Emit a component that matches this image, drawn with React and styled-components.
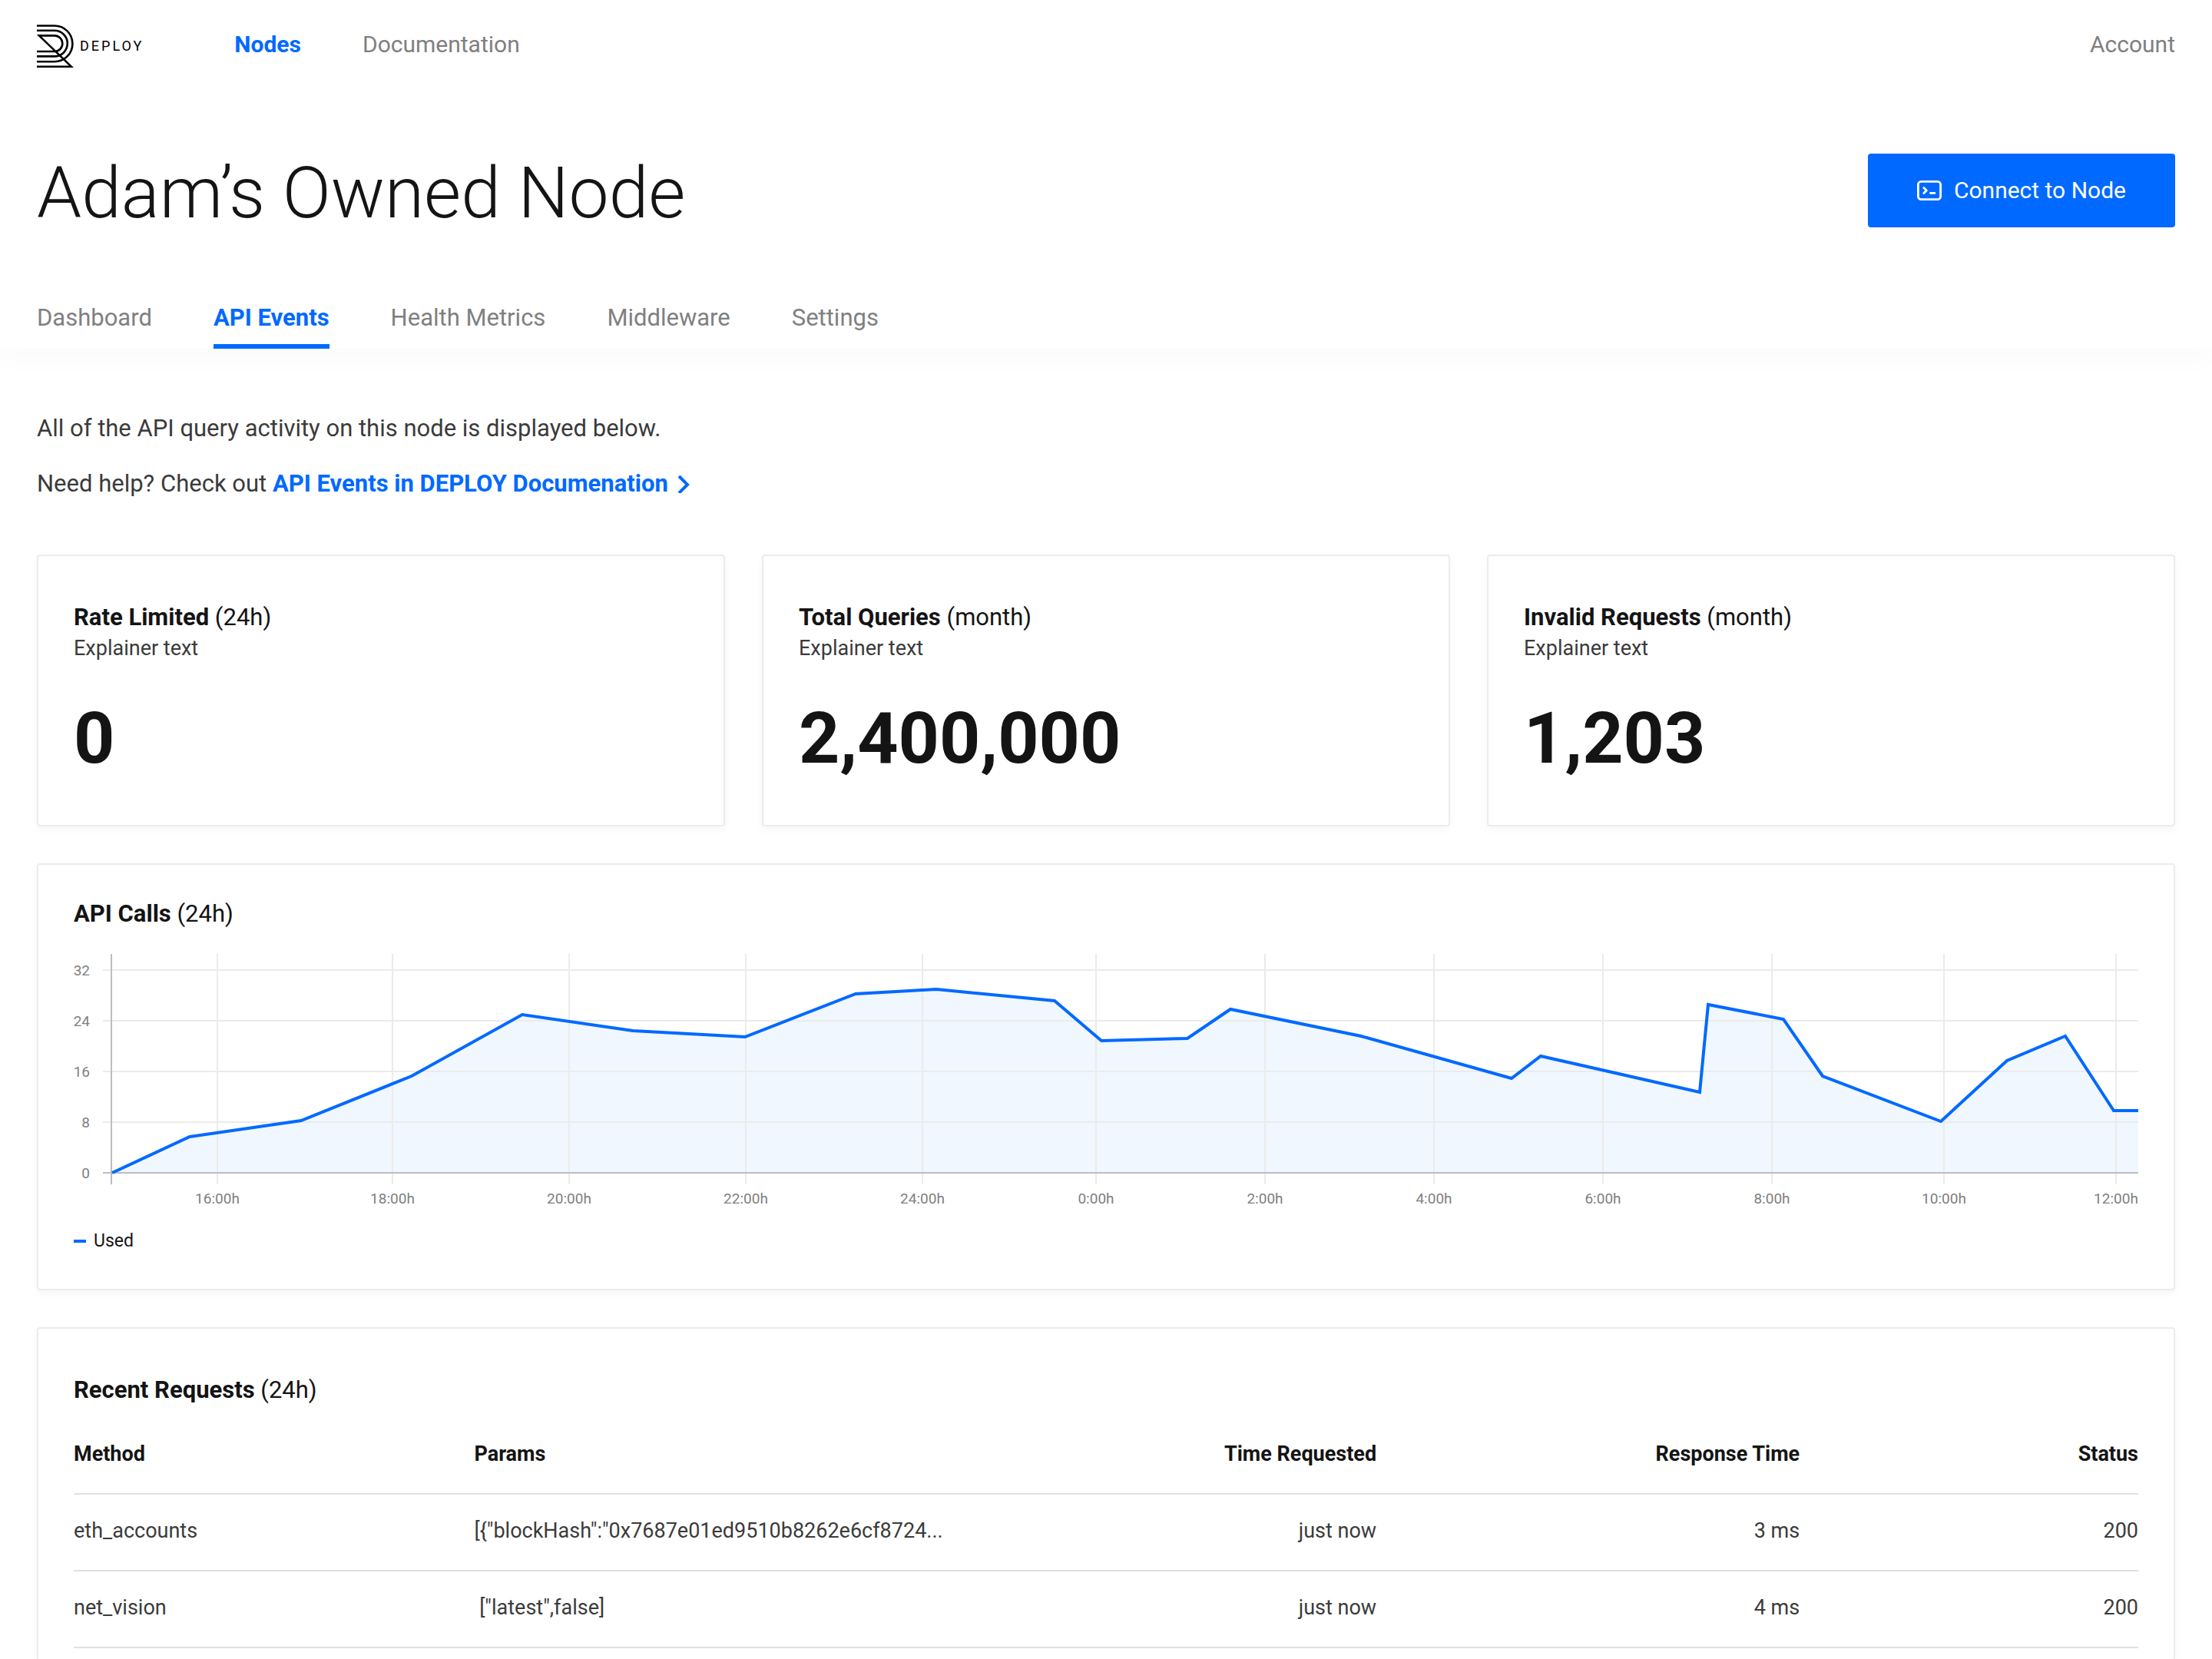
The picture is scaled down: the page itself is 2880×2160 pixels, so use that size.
import React, { useState } from "react";
import styled, { createGlobalStyle } from "styled-components";

const blue = "#0069ff";
const dark = "#141414";
const text = "#3b3b3b";
const grey = "#808080";

const navItems = ["Nodes", "Documentation"];
const tabs = [
  "Dashboard",
  "API Events",
  "Health Metrics",
  "Middleware",
  "Settings",
];

const stats = [
  { title: "Rate Limited", period: "24h", value: "0" },
  { title: "Total Queries", period: "month", value: "2,400,000" },
  { title: "Invalid Requests", period: "month", value: "1,203" },
];

const requests = [
  {
    method: "eth_accounts",
    params: '[{"blockHash":"0x7687e01ed9510b8262e6cf8724...',
    time: "just now",
    response: "3 ms",
    status: 200,
  },
  {
    method: "net_vision",
    params: ' ["latest",false]',
    time: "just now",
    response: "4 ms",
    status: 200,
  },
];

// chart, in viewBox units
const chart = { width: 2688, height: 332, left: 49, base: 285 };

const yTicks = [
  { label: "32", y: 21 },
  { label: "24", y: 87 },
  { label: "16", y: 153 },
  { label: "8", y: 219 },
  { label: "0", y: 285 },
];

const xTicks = [
  { label: "16:00h", x: 187 },
  { label: "18:00h", x: 415 },
  { label: "20:00h", x: 645 },
  { label: "22:00h", x: 875 },
  { label: "24:00h", x: 1105 },
  { label: "0:00h", x: 1331 },
  { label: "2:00h", x: 1551 },
  { label: "4:00h", x: 1771 },
  { label: "6:00h", x: 1991 },
  { label: "8:00h", x: 2211 },
  { label: "10:00h", x: 2435 },
  { label: "12:00h", x: 2659 },
];

const points = [
  [50, 285],
  [151, 238],
  [296, 217],
  [440, 159],
  [584, 79],
  [728, 100],
  [874, 108],
  [1018, 52],
  [1123, 46],
  [1277, 61],
  [1338, 113],
  [1450, 110],
  [1506, 72],
  [1676, 107],
  [1872, 162],
  [1910, 133],
  [2117, 180],
  [2128, 66],
  [2226, 85],
  [2277, 159],
  [2431, 218],
  [2517, 139],
  [2593, 107],
  [2656, 204],
  [2688, 204],
];

const Logo = () => (
  <svg width='48' height='56' viewBox='0 0 48 56' aria-hidden='true'>
    <g fill='none' stroke='#000' strokeWidth='2.6'>
      <path d='M0 1.5H23A23.4 23.4 0 0 1 23 48.3H0' />
      <path d='M0 7.8H23A16.8 16.8 0 0 1 23 41.4H0' />
      <path d='M0 35H23A10.3 10.3 0 0 0 23 14.4H3L45 54.8H0' />
    </g>
  </svg>
);

const TerminalIcon = () => (
  <svg width='32' height='26' viewBox='0 0 32 26' aria-hidden='true'>
    <g
      fill='none'
      stroke='#fff'
      strokeWidth='2.8'
      strokeLinecap='round'
      strokeLinejoin='round'
    >
      <rect x='1.4' y='1.4' width='29.2' height='23.2' rx='4' />
      <path d='M8.8 9.6L12.3 13L8.8 16.4' />
      <path d='M17.4 16.4H22.9' />
    </g>
  </svg>
);

const Chevron = () => (
  <svg width='16' height='24' viewBox='0 0 16 24' aria-hidden='true'>
    <path d='M2 2L13 13L2 24' fill='none' stroke={blue} strokeWidth='4' />
  </svg>
);

const Chart = () => {
  const line = points.map((point) => point.join(",")).join(" ");
  return (
    <ChartSvg
      viewBox={`0 0 ${chart.width} ${chart.height}`}
      role='img'
      aria-label='API calls in the last 24 hours'
    >
      <polygon
        points={`${line} ${chart.width},${chart.base} 50,${chart.base}`}
        fill='#f0f7ff'
      />
      {xTicks.map((tick) => (
        <g key={tick.label}>
          <path d={`M${tick.x} 0V300`} stroke='#ebebeb' strokeWidth='2' />
          <text x={tick.x} y='325' textAnchor='middle'>
            {tick.label}
          </text>
        </g>
      ))}
      {yTicks.map((tick) => (
        <g key={tick.label}>
          <path
            d={`M38 ${tick.y}H${chart.width}`}
            stroke={tick.y === chart.base ? "#bdbdc1" : "#ebebeb"}
            strokeWidth='2'
          />
          <text x='21' y={tick.y + 7} textAnchor='end'>
            {tick.label}
          </text>
        </g>
      ))}
      <path d={`M${chart.left} 0V300`} stroke='#bdbdc1' strokeWidth='2' />
      <polyline points={line} fill='none' stroke={blue} strokeWidth='4' />
    </ChartSvg>
  );
};

const App = () => {
  const [activeTab, setActiveTab] = useState("API Events");

  return (
    <Page>
      <GlobalStyle />
      <Header>
        <TopBar>
          <Brand href='#'>
            <Logo />
            DEPLOY
          </Brand>
          <Nav>
            {navItems.map((item) => (
              <NavLink href='#' key={item} $active={item === "Nodes"}>
                {item}
              </NavLink>
            ))}
            <AccountLink href='#'>Account</AccountLink>
          </Nav>
        </TopBar>
        <TitleRow>
          <PageTitle>Adam’s Owned Node</PageTitle>
          <ConnectButton type='button'>
            <TerminalIcon />
            Connect to Node
          </ConnectButton>
        </TitleRow>
        <Tabs>
          {tabs.map((tab) => (
            <Tab
              type='button'
              key={tab}
              $active={tab === activeTab}
              onClick={() => setActiveTab(tab)}
            >
              {tab}
            </Tab>
          ))}
        </Tabs>
      </Header>

      <Main>
        <Intro>
          <p>All of the API query activity on this node is displayed below.</p>
          <p>
            Need help? Check out{" "}
            <DocsLink href='#'>
              API Events in DEPLOY Documenation
              <Chevron />
            </DocsLink>
          </p>
        </Intro>

        <StatsGrid>
          {stats.map((stat) => (
            <Card key={stat.title}>
              <CardTitle>
                {stat.title} <span>({stat.period})</span>
              </CardTitle>
              <Explainer>Explainer text</Explainer>
              <StatValue>{stat.value}</StatValue>
            </Card>
          ))}
        </StatsGrid>

        <ChartCard>
          <CardTitle>
            API Calls <span>(24h)</span>
          </CardTitle>
          <Chart />
          <Legend>Used</Legend>
        </ChartCard>

        <RequestsCard>
          <CardTitle>
            Recent Requests <span>(24h)</span>
          </CardTitle>
          <Table>
            <thead>
              <tr>
                <Th $width='19.4%'>Method</Th>
                <Th $width='27.7%'>Params</Th>
                <Th $width='16%' $right>
                  Time Requested
                </Th>
                <Th $width='20.5%' $right>
                  Response Time
                </Th>
                <Th $width='16.4%' $right>
                  Status
                </Th>
              </tr>
            </thead>
            <tbody>
              {requests.map((request) => (
                <tr key={request.method}>
                  <Td>{request.method}</Td>
                  <Td>{request.params}</Td>
                  <Td $right>{request.time}</Td>
                  <Td $right>{request.response}</Td>
                  <Td $right>{request.status}</Td>
                </tr>
              ))}
            </tbody>
          </Table>
        </RequestsCard>
      </Main>
    </Page>
  );
};

export default App;

const GlobalStyle = createGlobalStyle`
  * {
    box-sizing: border-box;
    margin: 0;
    padding: 0;
  }
  body {
    background: #fff;
    color: ${text};
    font-family: Roboto, "Liberation Sans", sans-serif;
    font-size: 31px;
    line-height: 40px;
  }
  a {
    text-decoration: none;
  }
  button {
    font: inherit;
    border: 0;
    background: none;
    cursor: pointer;
  }
`;

const Page = styled.div`
  display: flex;
  flex-direction: column;
  min-height: 100vh;
`;

const Header = styled.header`
  padding: 0 48px;
  background: #fff;
  box-shadow: 0 16px 32px rgba(0, 0, 0, 0.02);
`;

const TopBar = styled.div`
  display: flex;
  align-items: center;
  height: 120px;
`;

const Brand = styled.a`
  display: flex;
  align-items: center;
  gap: 8px;
  color: #000;
  font-size: 18px;
  letter-spacing: 3px;
`;

const Nav = styled.nav`
  display: flex;
  flex: 1;
  gap: 80px;
  margin-left: 118px;
  padding-bottom: 4px;
  font-size: 30px;
`;

const NavLink = styled.a`
  color: ${({ $active }) => ($active ? blue : grey)};
  font-weight: ${({ $active }) => ($active ? 700 : 400)};
`;

const AccountLink = styled(NavLink)`
  margin-left: auto;
`;

const TitleRow = styled.div`
  display: flex;
  justify-content: space-between;
  align-items: flex-start;
  margin-top: 80px;
`;

const PageTitle = styled.h1`
  color: ${dark};
  font-size: 93px;
  font-weight: 300;
  line-height: 104px;
`;

const ConnectButton = styled.button`
  display: flex;
  align-items: center;
  gap: 16px;
  height: 96px;
  padding: 0 64px;
  border-radius: 4px;
  background: ${blue};
  color: #fff;
  font-size: 30px;
`;

const Tabs = styled.nav`
  display: flex;
  gap: 80px;
  margin-top: 90px;
`;

const Tab = styled.button`
  padding-bottom: 14px;
  border-bottom: 6px solid ${({ $active }) => ($active ? blue : "transparent")};
  color: ${({ $active }) => ($active ? blue : grey)};
  font-weight: ${({ $active }) => ($active ? 700 : 400)};
`;

const Main = styled.main`
  display: flex;
  flex: 1;
  flex-direction: column;
  gap: 48px;
  padding: 84px 48px 0;
`;

const Intro = styled.div`
  display: flex;
  flex-direction: column;
  gap: 32px;
  margin-bottom: 24px;
`;

const DocsLink = styled.a`
  display: inline-flex;
  align-items: center;
  gap: 12px;
  color: ${blue};
  font-weight: 700;
`;

const StatsGrid = styled.section`
  display: grid;
  grid-template-columns: repeat(3, 1fr);
  gap: 48px;
`;

const Card = styled.section`
  padding: 60px 46px;
  border: 2px solid #ececec;
  border-radius: 4px;
  background: #fff;
  box-shadow: 0 4px 12px rgba(0, 0, 0, 0.04);
`;

const ChartCard = styled(Card)`
  padding: 44px 46px 46px;
`;

const RequestsCard = styled(Card)`
  flex: 1;
  padding-bottom: 0;
  border-bottom: 0;
  border-radius: 4px 4px 0 0;
`;

const CardTitle = styled.h2`
  color: ${dark};
  font-size: 31px;
  font-weight: 700;

  span {
    font-weight: 400;
  }
`;

const Explainer = styled.p`
  font-size: 27px;
`;

const StatValue = styled.p`
  margin-top: 46px;
  color: ${dark};
  font-size: 93px;
  font-weight: 700;
  line-height: 104px;
`;

const ChartSvg = styled.svg`
  display: block;
  width: 100%;
  margin-top: 32px;

  text {
    fill: ${grey};
    font-size: 19px;
  }
`;

const Legend = styled.p`
  display: flex;
  align-items: center;
  gap: 10px;
  margin-top: 26px;
  color: ${dark};
  font-size: 23px;
  line-height: 32px;

  &::before {
    content: "";
    width: 16px;
    height: 4px;
    background: ${blue};
  }
`;

const Table = styled.table`
  width: 100%;
  margin-top: 16px;
  border-spacing: 0;
  table-layout: fixed;
  font-size: 27px;
`;

const Td = styled.td`
  padding: 27px 0 31px;
  border-bottom: 2px solid #e0e0e0;
  text-align: ${({ $right }) => ($right ? "right" : "left")};
  white-space: pre;
`;

const Th = styled(Td).attrs({ as: "th", scope: "col" })`
  width: ${({ $width }) => $width};
  color: ${dark};
  font-weight: 700;
`;
